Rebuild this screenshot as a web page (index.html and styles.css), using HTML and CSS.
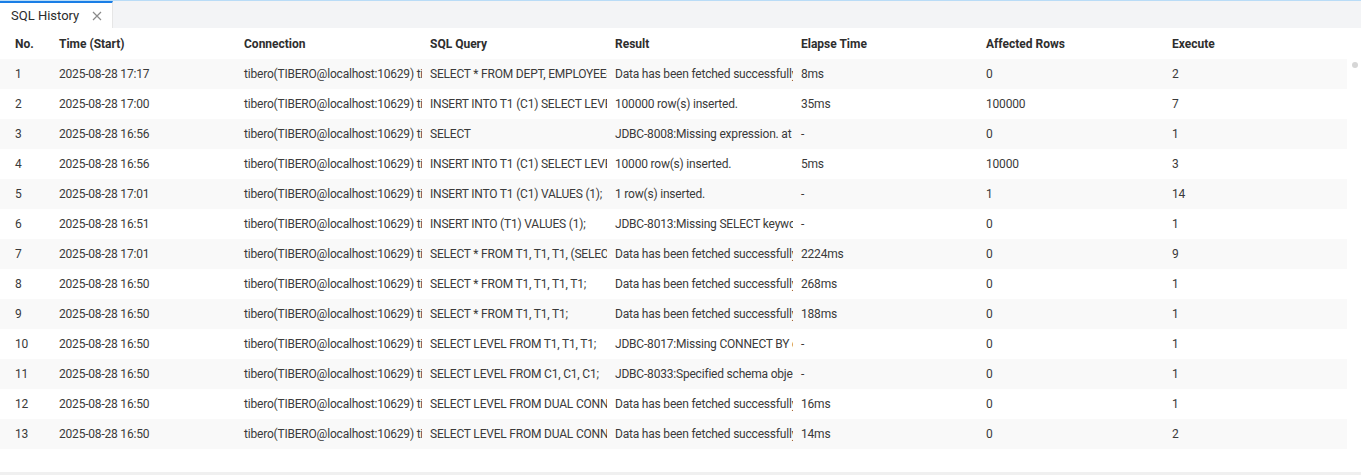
FILE: index.html
```html
<!DOCTYPE html>
<html>
<head>
<meta charset="utf-8">
<link rel="stylesheet" href="styles.css">
</head>
<body>
<div class="app">
  <div class="tabbar">
    <div class="tab">
      <span class="tab-title">SQL History</span>
      <svg class="tab-close" width="10" height="10" viewBox="0 0 10 10"><path d="M1 1 L9 9 M9 1 L1 9" stroke="#8a8a8a" stroke-width="1.2" fill="none"/></svg>
    </div>
  </div>
  <div class="content">
    <div class="grid">
      <div class="row head">
        <div class="cell c-no">No.</div><div class="cell">Time (Start)</div><div class="cell">Connection</div><div class="cell">SQL Query</div><div class="cell">Result</div><div class="cell">Elapse Time</div><div class="cell">Affected Rows</div><div class="cell">Execute</div>
      </div>
      <div class="row odd"><div class="cell c-no">1</div><div class="cell">2025-08-28 17:17</div><div class="cell">tibero(TIBERO@localhost:10629) tibero</div><div class="cell">SELECT * FROM DEPT, EMPLOYEES, SALARY</div><div class="cell">Data has been fetched successfully.</div><div class="cell">8ms</div><div class="cell">0</div><div class="cell">2</div></div>
      <div class="row"><div class="cell c-no">2</div><div class="cell">2025-08-28 17:00</div><div class="cell">tibero(TIBERO@localhost:10629) tibero</div><div class="cell">INSERT INTO T1 (C1) SELECT LEVEL FROM DUAL</div><div class="cell">100000 row(s) inserted.</div><div class="cell">35ms</div><div class="cell">100000</div><div class="cell">7</div></div>
      <div class="row odd"><div class="cell c-no">3</div><div class="cell">2025-08-28 16:56</div><div class="cell">tibero(TIBERO@localhost:10629) tibero</div><div class="cell">SELECT</div><div class="cell">JDBC-8008:Missing expression. at line 1</div><div class="cell">-</div><div class="cell">0</div><div class="cell">1</div></div>
      <div class="row"><div class="cell c-no">4</div><div class="cell">2025-08-28 16:56</div><div class="cell">tibero(TIBERO@localhost:10629) tibero</div><div class="cell">INSERT INTO T1 (C1) SELECT LEVEL FROM DUAL</div><div class="cell">10000 row(s) inserted.</div><div class="cell">5ms</div><div class="cell">10000</div><div class="cell">3</div></div>
      <div class="row odd"><div class="cell c-no">5</div><div class="cell">2025-08-28 17:01</div><div class="cell">tibero(TIBERO@localhost:10629) tibero</div><div class="cell">INSERT INTO T1 (C1) VALUES (1);</div><div class="cell">1 row(s) inserted.</div><div class="cell">-</div><div class="cell">1</div><div class="cell">14</div></div>
      <div class="row"><div class="cell c-no">6</div><div class="cell">2025-08-28 16:51</div><div class="cell">tibero(TIBERO@localhost:10629) tibero</div><div class="cell">INSERT INTO (T1) VALUES (1);</div><div class="cell">JDBC-8013:Missing SELECT keyword.</div><div class="cell">-</div><div class="cell">0</div><div class="cell">1</div></div>
      <div class="row odd"><div class="cell c-no">7</div><div class="cell">2025-08-28 17:01</div><div class="cell">tibero(TIBERO@localhost:10629) tibero</div><div class="cell">SELECT * FROM T1, T1, T1, (SELECT</div><div class="cell">Data has been fetched successfully.</div><div class="cell">2224ms</div><div class="cell">0</div><div class="cell">9</div></div>
      <div class="row"><div class="cell c-no">8</div><div class="cell">2025-08-28 16:50</div><div class="cell">tibero(TIBERO@localhost:10629) tibero</div><div class="cell">SELECT * FROM T1, T1, T1, T1;</div><div class="cell">Data has been fetched successfully.</div><div class="cell">268ms</div><div class="cell">0</div><div class="cell">1</div></div>
      <div class="row odd"><div class="cell c-no">9</div><div class="cell">2025-08-28 16:50</div><div class="cell">tibero(TIBERO@localhost:10629) tibero</div><div class="cell">SELECT * FROM T1, T1, T1;</div><div class="cell">Data has been fetched successfully.</div><div class="cell">188ms</div><div class="cell">0</div><div class="cell">1</div></div>
      <div class="row"><div class="cell c-no">10</div><div class="cell">2025-08-28 16:50</div><div class="cell">tibero(TIBERO@localhost:10629) tibero</div><div class="cell">SELECT LEVEL FROM T1, T1, T1;</div><div class="cell">JDBC-8017:Missing CONNECT BY clause.</div><div class="cell">-</div><div class="cell">0</div><div class="cell">1</div></div>
      <div class="row odd"><div class="cell c-no">11</div><div class="cell">2025-08-28 16:50</div><div class="cell">tibero(TIBERO@localhost:10629) tibero</div><div class="cell">SELECT LEVEL FROM C1, C1, C1;</div><div class="cell">JDBC-8033:Specified schema object</div><div class="cell">-</div><div class="cell">0</div><div class="cell">1</div></div>
      <div class="row"><div class="cell c-no">12</div><div class="cell">2025-08-28 16:50</div><div class="cell">tibero(TIBERO@localhost:10629) tibero</div><div class="cell">SELECT LEVEL FROM DUAL CONNECT BY</div><div class="cell">Data has been fetched successfully.</div><div class="cell">16ms</div><div class="cell">0</div><div class="cell">1</div></div>
      <div class="row odd"><div class="cell c-no">13</div><div class="cell">2025-08-28 16:50</div><div class="cell">tibero(TIBERO@localhost:10629) tibero</div><div class="cell">SELECT LEVEL FROM DUAL CONNECT BY</div><div class="cell">Data has been fetched successfully.</div><div class="cell">14ms</div><div class="cell">0</div><div class="cell">2</div></div>
    </div>
    <div class="scroll-thumb"></div>
  </div>
  <div class="footer"></div>
</div>
</body>
</html>
```

FILE: styles.css
```css
* { box-sizing: border-box; }
html, body { margin: 0; padding: 0; background: #fff; }
body {
  font-family: Roboto, "Noto Sans", sans-serif;
  font-size: 12px;
  color: #3a3a3a;
  width: 1361px;
  height: 475px;
  overflow: hidden;
}
.app { display: flex; flex-direction: column; height: 475px; }
.tabbar {
  height: 28px;
  background: #f3f4f6;
  border-top: 1px solid #b9dcf7;
  display: flex;
  align-items: stretch;
  flex: none;
}
.tab {
  width: 113px;
  background: #fff;
  border-top: 2px solid #1a7ee6;
  border-right: 1px solid #e6e6e6;
  display: flex;
  align-items: center;
  padding-left: 11px;
  gap: 13px;
}
.tab-title { font-size: 13px; color: #2b2b2b; }
.tab-close { display: block; }
.content { position: relative; flex: 1; }
.grid { width: 1347px; }
.row {
  display: grid;
  grid-template-columns: 51px 185px 186px 185px 186px 185px 186px 183px;
  height: 30px;
  align-items: center;
  letter-spacing: -0.2px;
}
.row.odd { background: #f9f9f9; }
.row.head { height: 31px; font-weight: 700; color: #2e2e2e; letter-spacing: 0; }
.cell {
  padding-left: 8px;
  white-space: nowrap;
  overflow: hidden;
  line-height: 30px;
}
.cell.c-no { padding-left: 15px; }
.scroll-thumb {
  position: absolute;
  left: 1352px;
  top: 34px;
  width: 6px;
  height: 6px;
  border-radius: 3px;
  background: #d6d6d6;
}
.footer { height: 3px; background: #f0f0f0; flex: none; }
```
